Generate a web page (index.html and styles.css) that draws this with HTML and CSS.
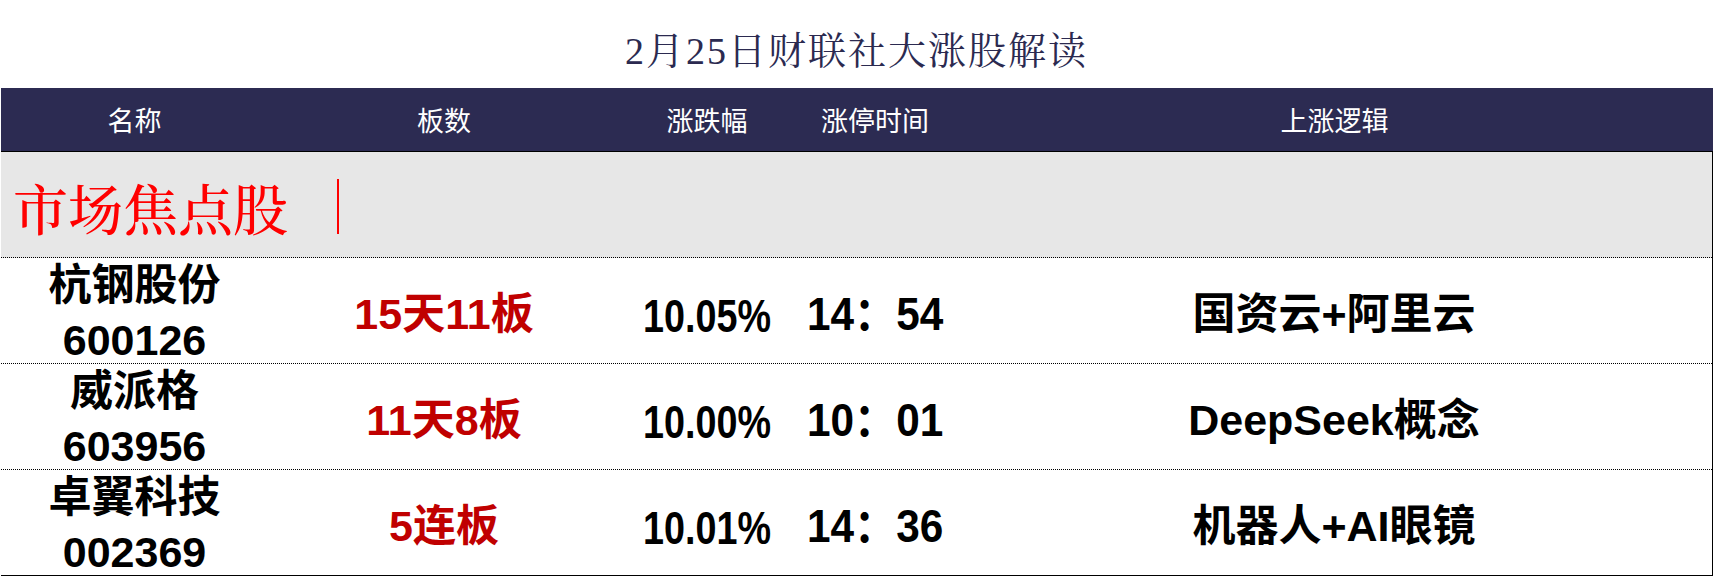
FILE: index.html
```html
<!DOCTYPE html>
<html lang="zh-CN">
<head>
<meta charset="utf-8">
<title>2月25日财联社大涨股解读</title>
<link rel="stylesheet" href="styles.css">
</head>
<body>
<div class="page">
  <h1 class="title">2月25日财联社大涨股解读</h1>
  <div class="table">
    <div class="row head">
      <div class="cell">名称</div>
      <div class="cell">板数</div>
      <div class="cell">涨跌幅</div>
      <div class="cell">涨停时间</div>
      <div class="cell">上涨逻辑</div>
    </div>
    <div class="body">
      <div class="section"><span class="section-text">市场焦点股</span><span class="bar"></span></div>
      <div class="row data">
        <div class="cell name"><span class="line">杭钢股份</span><span class="line">600126</span></div>
        <div class="cell board">15天11板</div>
        <div class="cell pct"><span class="narrow">10.05%</span></div>
        <div class="cell time"><span class="narrow-t">14：54</span></div>
        <div class="cell logic">国资云+阿里云</div>
      </div>
      <div class="row data">
        <div class="cell name"><span class="line">威派格</span><span class="line">603956</span></div>
        <div class="cell board">11天8板</div>
        <div class="cell pct"><span class="narrow">10.00%</span></div>
        <div class="cell time"><span class="narrow-t">10：01</span></div>
        <div class="cell logic">DeepSeek概念</div>
      </div>
      <div class="row data last">
        <div class="cell name"><span class="line">卓翼科技</span><span class="line">002369</span></div>
        <div class="cell board">5连板</div>
        <div class="cell pct"><span class="narrow">10.01%</span></div>
        <div class="cell time"><span class="narrow-t">14：36</span></div>
        <div class="cell logic">机器人+AI眼镜</div>
      </div>
    </div>
  </div>
</div>
</body>
</html>
```
FILE: styles.css
```css
* { box-sizing: border-box; }
html, body { margin: 0; padding: 0; background: #ffffff; }
body { width: 1713px; height: 576px; overflow: hidden; }

.page {
  width: 1713px;
  display: flex;
  flex-direction: column;
}

.title {
  margin: 0;
  height: 88px;
  display: flex;
  align-items: center;
  justify-content: center;
  padding-top: 6px;
  font-family: "Liberation Serif", "Noto Serif CJK SC", "Noto Sans CJK SC", serif;
  font-weight: 400;
  font-size: 38px;
  letter-spacing: 2px;
  color: #2b2a50;
}

.table {
  margin-left: 1px;
  display: flex;
  flex-direction: column;
}

.row {
  display: grid;
  grid-template-columns: 267px 352px 174px 162px 1fr;
}

.cell {
  display: flex;
  align-items: center;
  justify-content: center;
  white-space: nowrap;
}

.head {
  height: 64px;
  background: #2c2b52;
  border-bottom: 1px solid #000000;
  color: #ffffff;
  font-family: "Noto Sans CJK SC", "Liberation Sans", sans-serif;
  font-size: 27px;
  font-weight: 400;
}

.body {
  border-right: 1px solid #000000;
}

.section {
  height: 106px;
  background: #e7e7e7;
  border-bottom: 1px dotted #000000;
  display: flex;
  align-items: center;
  padding-left: 12px;
  padding-top: 4px;
  color: #ff0000;
}

.section-text {
  font-family: "Noto Serif CJK SC", "Liberation Serif", "Noto Sans CJK SC", serif;
  font-size: 55px;
  line-height: 60px;
  font-weight: 500;
}

.bar {
  width: 2px;
  height: 55px;
  background: #ff0000;
  margin-left: 49px;
}

.data {
  height: 106px;
  border-bottom: 1px dotted #000000;
  font-family: "Liberation Sans", "Noto Sans CJK SC", sans-serif;
  font-weight: 700;
  font-size: 43px;
  color: #000000;
}

.data.last {
  border-bottom: 1px solid #000000;
}

.name {
  flex-direction: column;
  padding-bottom: 4px;
}

.line {
  display: block;
  line-height: 55px;
}

.board {
  color: #c00000;
  padding-bottom: 10px;
}

.pct {
  font-family: "Liberation Sans", "Noto Sans CJK SC", sans-serif;
  font-size: 46px;
  padding-top: 2px;
}

.time {
  font-family: "Liberation Sans", "Noto Sans CJK SC", sans-serif;
  font-size: 46px;
  padding-bottom: 10px;
}

.narrow {
  display: inline-block;
  transform: scaleX(0.82);
}

.narrow-t {
  display: inline-block;
  transform: scaleX(0.92);
}

.logic {
  padding-bottom: 10px;
}
```
